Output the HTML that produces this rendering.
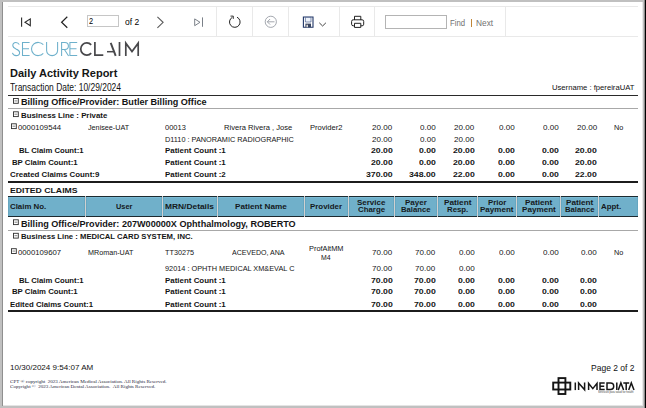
<!DOCTYPE html>
<html>
<head>
<meta charset="utf-8">
<title>Daily Activity Report</title>
<style>
html,body{margin:0;padding:0;}
body{width:646px;height:408px;position:relative;overflow:hidden;background:#c0c0c0;font-family:"Liberation Sans",sans-serif;color:#222;}
#page{position:absolute;left:3px;top:2px;width:639px;height:403px;background:#fff;}
.a{position:absolute;}
.t{position:absolute;white-space:nowrap;line-height:1;transform-origin:0 50%;}
.hl{position:absolute;left:8px;width:630px;height:1px;}
.sep{position:absolute;top:7px;width:1px;height:29px;background:#e9e9e9;}
.hc{position:absolute;top:196px;height:19px;background:#70b0ca;border-top:1px solid #1c2a30;border-bottom:1px solid #1c2a30;box-shadow:inset 1px 0 0 #66a6c0,inset -1px 0 0 #66a6c0,inset 0 1px 0 #7bbbd5;}
.bx{position:absolute;width:4px;height:4px;border:1px solid #2a2a2a;background:#fff;}
.bx i{position:absolute;left:1px;top:1.5px;width:2px;height:1px;background:#555;}
</style>
</head>
<body>
<div id="page"></div>
<!-- frame edges -->
<div class="a" style="left:2px;top:2px;width:1px;height:404px;background:#8f8f8f;"></div>
<div class="a" style="left:642px;top:2px;width:1px;height:404px;background:#e9e9e9;"></div>
<div class="a" style="left:3px;top:405px;width:640px;height:1px;background:#e4e4e4;"></div>
<div class="a" style="left:644px;top:0;width:1px;height:408px;background:#8c8c8c;"></div>
<div class="a" style="left:645px;top:0;width:1px;height:408px;background:#000;"></div>

<!-- toolbar -->
<div class="hl" style="top:6px;background:#e9e9e9;"></div>
<div class="hl" style="top:36px;background:#e9e9e9;"></div>
<div class="sep" style="left:216px;"></div>
<div class="sep" style="left:252px;"></div>
<div class="sep" style="left:288px;"></div>
<div class="sep" style="left:339px;"></div>
<div class="sep" style="left:374px;"></div>
<div class="sep" style="left:505px;"></div>

<svg class="a" style="left:0;top:0;" width="646" height="40" viewBox="0 0 646 40" fill="none" stroke-linecap="butt" stroke-linejoin="miter">
  <!-- first -->
  <path d="M21.6 17.4V26.8" stroke="#2a2a2a" stroke-width="1.1"/>
  <path d="M30.3 18.9L25 22.3L30.3 25.7Z" stroke="#2a2a2a" stroke-width="1.1"/>
  <!-- prev -->
  <path d="M67.3 16.8L61.6 22.3L67.3 27.8" stroke="#222" stroke-width="1.2"/>
  <!-- next -->
  <path d="M157.4 16.8L163.1 22.3L157.4 27.8" stroke="#5a5a5a" stroke-width="1.1"/>
  <!-- last -->
  <path d="M194.7 18.9L200 22.3L194.7 25.7Z" stroke="#7a8088" stroke-width="1"/>
  <path d="M202.5 17.4V26.8" stroke="#7a8088" stroke-width="1"/>
  <!-- refresh -->
  <path d="M237.0 17.2A5.3 5.3 0 1 1 232.4 17.3" stroke="#222" stroke-width="1"/>
  <path d="M230.5 16.1H233.3V18.9" stroke="#222" stroke-width="0.9"/>
  <!-- back -->
  <circle cx="270.8" cy="21.8" r="5.6" stroke="#9a9ea6" stroke-width="0.9"/>
  <path d="M267.3 21.8H274.5M270.1 19L267.3 21.8L270.1 24.6" stroke="#9a9ea6" stroke-width="0.9"/>
  <!-- save -->
  <path d="M303.4 17H313V27.2H303.4Z" stroke="#1f3566" stroke-width="1.1" fill="#fff"/>
  <path d="M305.4 17.4H311V22H305.4Z" fill="#eef3fb" stroke="#30477a" stroke-width="0.6"/>
  <path d="M305.4 23.6H311V27.2H305.4Z" fill="#3a4560" stroke="none"/><path d="M306.4 24.8H308V27.2H306.4Z" fill="#d8d8d8" stroke="none"/>
  <path d="M319.3 22.8L322.6 26L325.9 22.8" stroke="#444" stroke-width="1"/>
  <!-- print -->
  <path d="M354.5 20V16.3H360.8V20" stroke="#222" stroke-width="1"/>
  <rect x="351.6" y="19.8" width="12.1" height="6" rx="1.6" stroke="#222" stroke-width="1"/>
  <path d="M354.5 23.3H360.8V27.4H354.5Z" stroke="#222" stroke-width="1" fill="#fff"/>
</svg>

<div class="a" style="left:87px;top:15px;width:32px;height:12px;border:1px solid #c6c6c6;box-sizing:border-box;background:#fff;"></div>
<div class="a" style="left:385px;top:15px;width:62px;height:14px;border:1px solid #b4b4b4;box-sizing:border-box;background:#fff;"></div>
<div class="a" style="left:471px;top:19px;width:1px;height:8px;background:#c08638;"></div>

<!-- SECURECLAIM logo -->
<svg class="a" style="left:0;top:36px;" width="150" height="26" viewBox="0 36 150 26" fill="none" stroke-linecap="butt" stroke-linejoin="miter">
  <g stroke="#6db0cb" stroke-width="1.05">
    <path d="M19.3 44.6C18.7 43.3 17.5 42.4 15.9 42.4C14 42.4 12.8 43.8 12.8 45.5C12.8 47.5 14.4 48.2 16 48.9C17.8 49.6 19.6 50.4 19.6 52.4C19.6 54.3 18.1 55.6 16.1 55.6C14.2 55.6 12.9 54.5 12.4 52.9"/>
    <path d="M29.6 42.5H22.5V55.5H29.6M22.5 48.7H29"/>
    <path d="M43.3 44.7A6.7 6.6 0 1 0 43.3 53.3"/>
    <path d="M46.6 42V50.6A5.5 5 0 0 0 57.6 50.6V42"/>
    <path d="M61.6 56V42.5H64.9A3.5 3.5 0 0 1 64.9 49.5H61.6M64.4 49.5L68.6 56"/>
    <path d="M77.2 42.5H69.9V55.5H77.2M69.9 48.7H76.5"/>
  </g>
  <g stroke="#48484b" stroke-width="1.7">
    <path d="M91.2 44.9A6 6.1 0 1 0 91.2 53.1"/>
    <path d="M94.9 42V55.2H103.3"/>
    <path d="M110.7 42.8L115.7 55.8" stroke-width="1.9"/>
    <path d="M107 51.7H114.3" stroke-width="1.5"/>
    <path d="M119.5 42V56"/>
    <path d="M125.8 56V43.2L132 51.6L138.2 43.2V56"/>
  </g>
</svg>

<!-- rules -->
<div class="hl" style="top:95px;background:#2a2a2a;"></div>
<div class="hl" style="top:108px;background:#a8a8a8;"></div>
<div class="hl" style="top:181px;height:2px;background:#1c1c1c;"></div>
<div class="hl" style="top:230px;background:#a8a8a8;"></div>
<div class="hl" style="top:310px;height:2px;background:#1c1c1c;"></div>

<!-- expand boxes -->
<svg class="a" style="left:0;top:90px;" width="30" height="170" viewBox="0 90 30 170" fill="none">
  <rect x="13.5" y="98.5" width="4.8" height="4.8" stroke="#2e2e2e" stroke-width="0.9" fill="#fff"/>
  <path d="M14.5 100.9H17.3" stroke="#666" stroke-width="0.8"/>
  <rect x="13.5" y="111.8" width="4.8" height="4.8" stroke="#2e2e2e" stroke-width="0.9" fill="#fff"/>
  <path d="M14.5 114.2H17.3" stroke="#666" stroke-width="0.8"/>
  <rect x="11.5" y="123.8" width="4.8" height="4.8" stroke="#2e2e2e" stroke-width="0.9" fill="#fff"/>
  <path d="M12.5 126.2H15.3" stroke="#666" stroke-width="0.8"/>
  <rect x="13.5" y="219.8" width="4.8" height="4.8" stroke="#2e2e2e" stroke-width="0.9" fill="#fff"/>
  <path d="M14.5 222.2H17.3" stroke="#666" stroke-width="0.8"/>
  <rect x="13.5" y="233.3" width="4.8" height="4.8" stroke="#2e2e2e" stroke-width="0.9" fill="#fff"/>
  <path d="M14.5 235.7H17.3" stroke="#666" stroke-width="0.8"/>
  <rect x="11.5" y="248.7" width="4.8" height="4.8" stroke="#2e2e2e" stroke-width="0.9" fill="#fff"/>
  <path d="M12.5 251.1H15.3" stroke="#666" stroke-width="0.8"/>
</svg>

<!-- table header -->
<div class="a" style="left:8px;top:196px;width:630px;height:21px;background:#d0d0d0;"></div>
<div class="hc" style="left:8px;width:77px;"></div>
<div class="hc" style="left:86px;width:76px;"></div>
<div class="hc" style="left:163px;width:54px;"></div>
<div class="hc" style="left:218px;width:86px;"></div>
<div class="hc" style="left:305px;width:43px;"></div>
<div class="hc" style="left:349px;width:45px;"></div>
<div class="hc" style="left:395px;width:42px;"></div>
<div class="hc" style="left:438px;width:39px;"></div>
<div class="hc" style="left:478px;width:38px;"></div>
<div class="hc" style="left:517px;width:43px;"></div>
<div class="hc" style="left:561px;width:37px;"></div>
<div class="hc" style="left:599px;width:39px;"></div>

<!-- inmediata mark -->
<svg class="a" style="left:548px;top:372px;" width="92" height="28" viewBox="548 372 92 28" fill="none">
  <rect x="558.5" y="378.1" width="6.9" height="15.9" stroke="#151515" stroke-width="1.9"/>
  <rect x="553.2" y="382.6" width="17.1" height="6.9" stroke="#151515" stroke-width="1.9"/>
  <g stroke="#161616" stroke-width="1.5" stroke-linejoin="miter">
    <path d="M575.3 382.5V390.1"/>
    <path d="M578.6 390.1V382.9L584.6 389.7V382.5"/>
    <path d="M588.6 390.1V383.4L592.8 388.6L597 383.4V390.1"/>
    <path d="M604.7 383.1H600V389.5H604.7M600 386.3H604.2"/>
    <path d="M607 383.1H610.4A3.3 3.2 0 0 1 610.4 389.5H607Z"/>
    <path d="M616.8 382.5V390.1"/>
    <path d="M618.3 390.1L620.9 383L623.6 390.1"/>
    <path d="M623.3 383.1H629.2M626.2 383.1V390.1"/>
    <path d="M628.7 390.1L631.3 383L634 390.1"/>
  </g>
</svg>

<div class="t" style="left:88.6px;top:18.2px;font-size:8.2px;color:#000;transform:scaleX(0.899);">2</div>
<div class="t" style="left:124.8px;top:17.6px;font-size:8.7px;color:#000;transform:scaleX(0.979);">of 2</div>
<div class="t" style="left:449.8px;top:18.7px;font-size:8.6px;color:#707070;transform:scaleX(0.903);">Find</div>
<div class="t" style="left:475.7px;top:18.7px;font-size:8.6px;color:#707070;transform:scaleX(0.968);">Next</div>
<div class="t" style="left:10.0px;top:67.7px;font-size:10.5px;color:#151515;font-weight:bold;transform:scaleX(1.049);">Daily Activity Report</div>
<div class="t" style="left:10.0px;top:83.4px;font-size:10.4px;color:#111;transform:scaleX(0.813);">Transaction Date: 10/29/2024</div>
<div class="t" style="left:551.5px;top:84.0px;font-size:7.4px;color:#111;transform:scaleX(1.036);">Username : fpereiraUAT</div>
<div class="t" style="left:20.8px;top:98.8px;font-size:8.2px;color:#141414;font-weight:bold;transform:scaleX(1.108);">Billing Office/Provider: Butler Billing Office</div>
<div class="t" style="left:20.7px;top:111.6px;font-size:7.2px;color:#141414;font-weight:bold;transform:scaleX(1.091);">Business Line : Private</div>
<div class="t" style="left:18.1px;top:123.9px;font-size:7.2px;color:#141414;transform:scaleX(1.078);">0000109544</div>
<div class="t" style="left:87.6px;top:123.9px;font-size:7.2px;color:#141414;transform:scaleX(1.004);">Jenisee-UAT</div>
<div class="t" style="left:164.9px;top:123.9px;font-size:7.2px;color:#141414;transform:scaleX(1.040);">00013</div>
<div class="t" style="left:224.4px;top:123.9px;font-size:7.2px;color:#141414;transform:scaleX(1.054);">Rivera Rivera , Jose</div>
<div class="t" style="left:309.6px;top:123.9px;font-size:7.2px;color:#141414;transform:scaleX(1.056);">Provider2</div>
<div class="t" style="left:372.1px;top:123.9px;font-size:7.2px;color:#141414;transform:scaleX(1.118);">20.00</div>
<div class="t" style="left:419.6px;top:123.9px;font-size:7.2px;color:#141414;transform:scaleX(1.122);">0.00</div>
<div class="t" style="left:454.2px;top:123.9px;font-size:7.2px;color:#141414;transform:scaleX(1.118);">20.00</div>
<div class="t" style="left:498.9px;top:123.9px;font-size:7.2px;color:#141414;transform:scaleX(1.122);">0.00</div>
<div class="t" style="left:543.2px;top:123.9px;font-size:7.2px;color:#141414;transform:scaleX(1.122);">0.00</div>
<div class="t" style="left:576.7px;top:123.9px;font-size:7.2px;color:#141414;transform:scaleX(1.118);">20.00</div>
<div class="t" style="left:614.0px;top:123.9px;font-size:7.2px;color:#141414;transform:scaleX(1.011);">No</div>
<div class="t" style="left:164.9px;top:135.6px;font-size:7.2px;color:#141414;transform:scaleX(1.017);">D1110 : PANORAMIC RADIOGRAPHIC</div>
<div class="t" style="left:372.1px;top:135.6px;font-size:7.2px;color:#141414;transform:scaleX(1.118);">20.00</div>
<div class="t" style="left:419.6px;top:135.6px;font-size:7.2px;color:#141414;transform:scaleX(1.122);">0.00</div>
<div class="t" style="left:454.2px;top:135.6px;font-size:7.2px;color:#141414;transform:scaleX(1.118);">20.00</div>
<div class="t" style="left:19.1px;top:147.3px;font-size:7.2px;color:#141414;font-weight:bold;transform:scaleX(1.072);">BL Claim Count:1</div>
<div class="t" style="left:164.9px;top:147.3px;font-size:7.2px;color:#141414;font-weight:bold;transform:scaleX(1.103);">Patient Count :1</div>
<div class="t" style="left:370.7px;top:147.3px;font-size:7.2px;color:#141414;font-weight:bold;transform:scaleX(1.211);">20.00</div>
<div class="t" style="left:418.7px;top:147.3px;font-size:7.2px;color:#141414;font-weight:bold;transform:scaleX(1.207);">0.00</div>
<div class="t" style="left:452.8px;top:147.3px;font-size:7.2px;color:#141414;font-weight:bold;transform:scaleX(1.211);">20.00</div>
<div class="t" style="left:498.0px;top:147.3px;font-size:7.2px;color:#141414;font-weight:bold;transform:scaleX(1.207);">0.00</div>
<div class="t" style="left:542.3px;top:147.3px;font-size:7.2px;color:#141414;font-weight:bold;transform:scaleX(1.207);">0.00</div>
<div class="t" style="left:575.3px;top:147.3px;font-size:7.2px;color:#141414;font-weight:bold;transform:scaleX(1.211);">20.00</div>
<div class="t" style="left:12.0px;top:159.0px;font-size:7.2px;color:#141414;font-weight:bold;transform:scaleX(1.083);">BP Claim Count:1</div>
<div class="t" style="left:164.9px;top:159.0px;font-size:7.2px;color:#141414;font-weight:bold;transform:scaleX(1.103);">Patient Count :1</div>
<div class="t" style="left:370.7px;top:159.0px;font-size:7.2px;color:#141414;font-weight:bold;transform:scaleX(1.211);">20.00</div>
<div class="t" style="left:418.7px;top:159.0px;font-size:7.2px;color:#141414;font-weight:bold;transform:scaleX(1.207);">0.00</div>
<div class="t" style="left:452.8px;top:159.0px;font-size:7.2px;color:#141414;font-weight:bold;transform:scaleX(1.211);">20.00</div>
<div class="t" style="left:498.0px;top:159.0px;font-size:7.2px;color:#141414;font-weight:bold;transform:scaleX(1.207);">0.00</div>
<div class="t" style="left:542.3px;top:159.0px;font-size:7.2px;color:#141414;font-weight:bold;transform:scaleX(1.207);">0.00</div>
<div class="t" style="left:575.3px;top:159.0px;font-size:7.2px;color:#141414;font-weight:bold;transform:scaleX(1.211);">20.00</div>
<div class="t" style="left:10.0px;top:171.1px;font-size:7.2px;color:#141414;font-weight:bold;transform:scaleX(1.096);">Created Claims Count:9</div>
<div class="t" style="left:164.9px;top:171.1px;font-size:7.2px;color:#141414;font-weight:bold;transform:scaleX(1.103);">Patient Count :2</div>
<div class="t" style="left:365.8px;top:171.1px;font-size:7.2px;color:#141414;font-weight:bold;transform:scaleX(1.214);">370.00</div>
<div class="t" style="left:408.9px;top:171.1px;font-size:7.2px;color:#141414;font-weight:bold;transform:scaleX(1.214);">348.00</div>
<div class="t" style="left:452.8px;top:171.1px;font-size:7.2px;color:#141414;font-weight:bold;transform:scaleX(1.211);">22.00</div>
<div class="t" style="left:498.0px;top:171.1px;font-size:7.2px;color:#141414;font-weight:bold;transform:scaleX(1.207);">0.00</div>
<div class="t" style="left:542.3px;top:171.1px;font-size:7.2px;color:#141414;font-weight:bold;transform:scaleX(1.207);">0.00</div>
<div class="t" style="left:575.3px;top:171.1px;font-size:7.2px;color:#141414;font-weight:bold;transform:scaleX(1.211);">22.00</div>
<div class="t" style="left:9.6px;top:187.4px;font-size:8.0px;color:#141414;font-weight:bold;transform:scaleX(1.086);">EDITED CLAIMS</div>
<div class="t" style="left:9.6px;top:203.1px;font-size:7.2px;color:#15191c;font-weight:bold;transform:scaleX(1.095);">Claim No.</div>
<div class="t" style="left:115.8px;top:203.1px;font-size:7.2px;color:#15191c;font-weight:bold;transform:scaleX(1.032);">User</div>
<div class="t" style="left:165.0px;top:203.1px;font-size:7.2px;color:#15191c;font-weight:bold;transform:scaleX(1.166);">MRN/Details</div>
<div class="t" style="left:234.7px;top:203.1px;font-size:7.2px;color:#15191c;font-weight:bold;transform:scaleX(1.139);">Patient Name</div>
<div class="t" style="left:309.9px;top:203.1px;font-size:7.2px;color:#15191c;font-weight:bold;transform:scaleX(1.100);">Provider</div>
<div class="t" style="left:356.8px;top:198.8px;font-size:7.2px;color:#15191c;font-weight:bold;transform:scaleX(1.110);">Service</div>
<div class="t" style="left:357.6px;top:206.3px;font-size:7.2px;color:#15191c;font-weight:bold;transform:scaleX(1.094);">Charge</div>
<div class="t" style="left:404.7px;top:198.8px;font-size:7.2px;color:#15191c;font-weight:bold;transform:scaleX(1.113);">Payer</div>
<div class="t" style="left:400.7px;top:206.3px;font-size:7.2px;color:#15191c;font-weight:bold;transform:scaleX(1.073);">Balance</div>
<div class="t" style="left:443.6px;top:198.8px;font-size:7.2px;color:#15191c;font-weight:bold;transform:scaleX(1.147);">Patient</div>
<div class="t" style="left:446.6px;top:206.3px;font-size:7.2px;color:#15191c;font-weight:bold;transform:scaleX(1.088);">Resp.</div>
<div class="t" style="left:487.8px;top:198.8px;font-size:7.2px;color:#15191c;font-weight:bold;transform:scaleX(1.085);">Prior</div>
<div class="t" style="left:480.0px;top:206.3px;font-size:7.2px;color:#15191c;font-weight:bold;transform:scaleX(1.118);">Payment</div>
<div class="t" style="left:524.9px;top:198.8px;font-size:7.2px;color:#15191c;font-weight:bold;transform:scaleX(1.139);">Patient</div>
<div class="t" style="left:521.6px;top:206.3px;font-size:7.2px;color:#15191c;font-weight:bold;transform:scaleX(1.128);">Payment</div>
<div class="t" style="left:566.2px;top:198.8px;font-size:7.2px;color:#15191c;font-weight:bold;transform:scaleX(1.139);">Patient</div>
<div class="t" style="left:564.7px;top:206.3px;font-size:7.2px;color:#15191c;font-weight:bold;transform:scaleX(1.073);">Balance</div>
<div class="t" style="left:600.5px;top:203.1px;font-size:7.2px;color:#15191c;font-weight:bold;transform:scaleX(1.094);">Appt.</div>
<div class="t" style="left:20.7px;top:220.5px;font-size:8.2px;color:#141414;font-weight:bold;transform:scaleX(1.109);">Billing Office/Provider: 207W00000X Ophthalmology, ROBERTO</div>
<div class="t" style="left:20.7px;top:233.2px;font-size:7.2px;color:#141414;font-weight:bold;transform:scaleX(1.070);">Business Line : MEDICAL CARD SYSTEM, INC.</div>
<div class="t" style="left:18.1px;top:249.3px;font-size:7.2px;color:#141414;transform:scaleX(1.078);">0000109607</div>
<div class="t" style="left:87.6px;top:249.3px;font-size:7.2px;color:#141414;transform:scaleX(1.002);">MRoman-UAT</div>
<div class="t" style="left:164.9px;top:249.3px;font-size:7.2px;color:#141414;transform:scaleX(1.011);">TT30275</div>
<div class="t" style="left:231.7px;top:249.3px;font-size:7.2px;color:#141414;transform:scaleX(0.981);">ACEVEDO, ANA</div>
<div class="t" style="left:308.6px;top:245.3px;font-size:7.2px;color:#141414;transform:scaleX(1.028);">ProfAltMM</div>
<div class="t" style="left:321.4px;top:254.0px;font-size:7.2px;color:#141414;transform:scaleX(0.960);">M4</div>
<div class="t" style="left:372.1px;top:249.3px;font-size:7.2px;color:#141414;transform:scaleX(1.118);">70.00</div>
<div class="t" style="left:415.2px;top:249.3px;font-size:7.2px;color:#141414;transform:scaleX(1.118);">70.00</div>
<div class="t" style="left:458.6px;top:249.3px;font-size:7.2px;color:#141414;transform:scaleX(1.122);">0.00</div>
<div class="t" style="left:498.9px;top:249.3px;font-size:7.2px;color:#141414;transform:scaleX(1.122);">0.00</div>
<div class="t" style="left:543.2px;top:249.3px;font-size:7.2px;color:#141414;transform:scaleX(1.122);">0.00</div>
<div class="t" style="left:581.1px;top:249.3px;font-size:7.2px;color:#141414;transform:scaleX(1.122);">0.00</div>
<div class="t" style="left:614.0px;top:249.3px;font-size:7.2px;color:#141414;transform:scaleX(1.011);">No</div>
<div class="t" style="left:164.9px;top:265.3px;font-size:7.2px;color:#141414;transform:scaleX(1.018);">92014 : OPHTH MEDICAL XM&amp;EVAL C</div>
<div class="t" style="left:372.1px;top:265.3px;font-size:7.2px;color:#141414;transform:scaleX(1.118);">70.00</div>
<div class="t" style="left:415.2px;top:265.3px;font-size:7.2px;color:#141414;transform:scaleX(1.118);">70.00</div>
<div class="t" style="left:458.6px;top:265.3px;font-size:7.2px;color:#141414;transform:scaleX(1.122);">0.00</div>
<div class="t" style="left:19.1px;top:276.6px;font-size:7.2px;color:#141414;font-weight:bold;transform:scaleX(1.072);">BL Claim Count:1</div>
<div class="t" style="left:164.9px;top:276.6px;font-size:7.2px;color:#141414;font-weight:bold;transform:scaleX(1.103);">Patient Count :1</div>
<div class="t" style="left:370.7px;top:276.6px;font-size:7.2px;color:#141414;font-weight:bold;transform:scaleX(1.211);">70.00</div>
<div class="t" style="left:413.8px;top:276.6px;font-size:7.2px;color:#141414;font-weight:bold;transform:scaleX(1.211);">70.00</div>
<div class="t" style="left:457.7px;top:276.6px;font-size:7.2px;color:#141414;font-weight:bold;transform:scaleX(1.207);">0.00</div>
<div class="t" style="left:498.0px;top:276.6px;font-size:7.2px;color:#141414;font-weight:bold;transform:scaleX(1.207);">0.00</div>
<div class="t" style="left:542.3px;top:276.6px;font-size:7.2px;color:#141414;font-weight:bold;transform:scaleX(1.207);">0.00</div>
<div class="t" style="left:580.2px;top:276.6px;font-size:7.2px;color:#141414;font-weight:bold;transform:scaleX(1.207);">0.00</div>
<div class="t" style="left:12.0px;top:288.1px;font-size:7.2px;color:#141414;font-weight:bold;transform:scaleX(1.083);">BP Claim Count:1</div>
<div class="t" style="left:164.9px;top:288.1px;font-size:7.2px;color:#141414;font-weight:bold;transform:scaleX(1.103);">Patient Count :1</div>
<div class="t" style="left:370.7px;top:288.1px;font-size:7.2px;color:#141414;font-weight:bold;transform:scaleX(1.211);">70.00</div>
<div class="t" style="left:413.8px;top:288.1px;font-size:7.2px;color:#141414;font-weight:bold;transform:scaleX(1.211);">70.00</div>
<div class="t" style="left:457.7px;top:288.1px;font-size:7.2px;color:#141414;font-weight:bold;transform:scaleX(1.207);">0.00</div>
<div class="t" style="left:498.0px;top:288.1px;font-size:7.2px;color:#141414;font-weight:bold;transform:scaleX(1.207);">0.00</div>
<div class="t" style="left:542.3px;top:288.1px;font-size:7.2px;color:#141414;font-weight:bold;transform:scaleX(1.207);">0.00</div>
<div class="t" style="left:580.2px;top:288.1px;font-size:7.2px;color:#141414;font-weight:bold;transform:scaleX(1.207);">0.00</div>
<div class="t" style="left:10.0px;top:300.8px;font-size:7.2px;color:#141414;font-weight:bold;transform:scaleX(1.082);">Edited Claims Count:1</div>
<div class="t" style="left:164.9px;top:300.8px;font-size:7.2px;color:#141414;font-weight:bold;transform:scaleX(1.103);">Patient Count :1</div>
<div class="t" style="left:370.7px;top:300.8px;font-size:7.2px;color:#141414;font-weight:bold;transform:scaleX(1.211);">70.00</div>
<div class="t" style="left:413.8px;top:300.8px;font-size:7.2px;color:#141414;font-weight:bold;transform:scaleX(1.211);">70.00</div>
<div class="t" style="left:457.7px;top:300.8px;font-size:7.2px;color:#141414;font-weight:bold;transform:scaleX(1.207);">0.00</div>
<div class="t" style="left:498.0px;top:300.8px;font-size:7.2px;color:#141414;font-weight:bold;transform:scaleX(1.207);">0.00</div>
<div class="t" style="left:542.3px;top:300.8px;font-size:7.2px;color:#141414;font-weight:bold;transform:scaleX(1.207);">0.00</div>
<div class="t" style="left:580.2px;top:300.8px;font-size:7.2px;color:#141414;font-weight:bold;transform:scaleX(1.207);">0.00</div>
<div class="t" style="left:10.0px;top:363.8px;font-size:7.7px;color:#111;transform:scaleX(1.048);">10/30/2024 9:54:07 AM</div>
<div class="t" style="left:10.0px;top:378.8px;font-size:5.0px;color:#26263c;font-family:'Liberation Serif',serif;transform:scaleX(1.017);">CPT ® copyright &nbsp;2023 American Medical Association. All Rights Reserved.</div>
<div class="t" style="left:10.0px;top:383.9px;font-size:5.0px;color:#26263c;font-family:'Liberation Serif',serif;transform:scaleX(1.014);">Copyright © &nbsp;2023 American Dental Association. &nbsp;All Rights Reserved.</div>
<div class="t" style="left:598.2px;top:390.9px;font-size:2.9px;color:#444;transform:scaleX(0.915);">Servicios para salud for health</div>
<div class="t" style="left:590.9px;top:363.2px;font-size:9.8px;color:#111;transform:scaleX(0.868);">Page 2 of 2</div>
</body>
</html>
